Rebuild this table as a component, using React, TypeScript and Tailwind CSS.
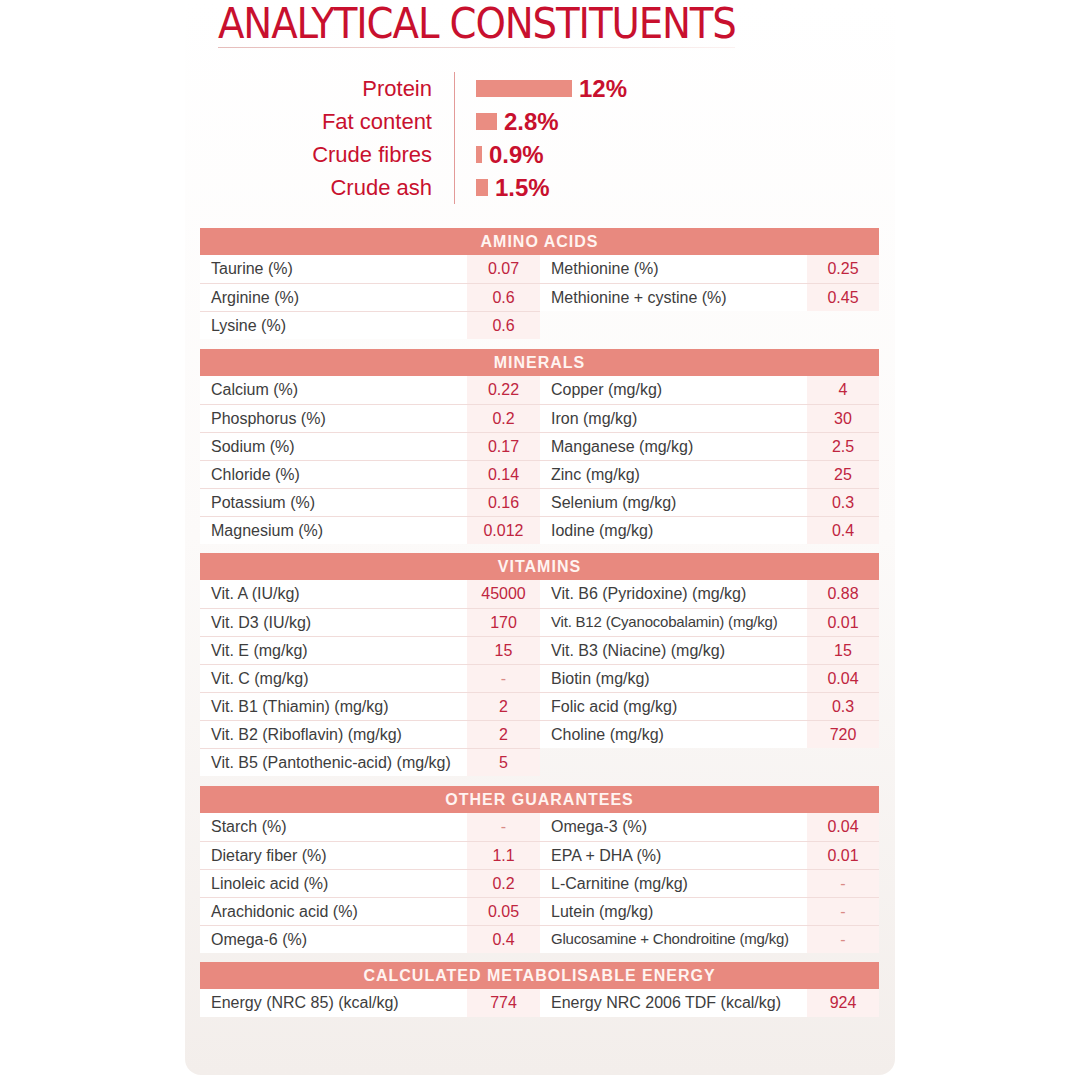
type Row = [string, string];

type Section = {
  title: string;
  left: Row[];
  right: Row[];
  gap: string;
};

const bars = [
  { label: "Protein", value: "12%", width: "w-[96px]" },
  { label: "Fat content", value: "2.8%", width: "w-[21px]" },
  { label: "Crude fibres", value: "0.9%", width: "w-[6px]" },
  { label: "Crude ash", value: "1.5%", width: "w-[12px]" },
];

const sections: Section[] = [
  {
    title: "AMINO ACIDS",
    gap: "mt-[24px]",
    left: [
      ["Taurine (%)", "0.07"],
      ["Arginine (%)", "0.6"],
      ["Lysine (%)", "0.6"],
    ],
    right: [
      ["Methionine (%)", "0.25"],
      ["Methionine + cystine (%)", "0.45"],
    ],
  },
  {
    title: "MINERALS",
    gap: "mt-[10px]",
    left: [
      ["Calcium (%)", "0.22"],
      ["Phosphorus (%)", "0.2"],
      ["Sodium (%)", "0.17"],
      ["Chloride (%)", "0.14"],
      ["Potassium (%)", "0.16"],
      ["Magnesium (%)", "0.012"],
    ],
    right: [
      ["Copper (mg/kg)", "4"],
      ["Iron (mg/kg)", "30"],
      ["Manganese (mg/kg)", "2.5"],
      ["Zinc (mg/kg)", "25"],
      ["Selenium (mg/kg)", "0.3"],
      ["Iodine (mg/kg)", "0.4"],
    ],
  },
  {
    title: "VITAMINS",
    gap: "mt-[9px]",
    left: [
      ["Vit. A (IU/kg)", "45000"],
      ["Vit. D3 (IU/kg)", "170"],
      ["Vit. E (mg/kg)", "15"],
      ["Vit. C (mg/kg)", "-"],
      ["Vit. B1 (Thiamin) (mg/kg)", "2"],
      ["Vit. B2 (Riboflavin) (mg/kg)", "2"],
      ["Vit. B5 (Pantothenic-acid) (mg/kg)", "5"],
    ],
    right: [
      ["Vit. B6 (Pyridoxine) (mg/kg)", "0.88"],
      ["Vit. B12 (Cyanocobalamin) (mg/kg)", "0.01"],
      ["Vit. B3 (Niacine) (mg/kg)", "15"],
      ["Biotin (mg/kg)", "0.04"],
      ["Folic acid (mg/kg)", "0.3"],
      ["Choline (mg/kg)", "720"],
    ],
  },
  {
    title: "OTHER GUARANTEES",
    gap: "mt-[10px]",
    left: [
      ["Starch (%)", "-"],
      ["Dietary fiber (%)", "1.1"],
      ["Linoleic acid (%)", "0.2"],
      ["Arachidonic acid (%)", "0.05"],
      ["Omega-6 (%)", "0.4"],
    ],
    right: [
      ["Omega-3 (%)", "0.04"],
      ["EPA + DHA (%)", "0.01"],
      ["L-Carnitine (mg/kg)", "-"],
      ["Lutein (mg/kg)", "-"],
      ["Glucosamine + Chondroitine (mg/kg)", "-"],
    ],
  },
  {
    title: "CALCULATED METABOLISABLE ENERGY",
    gap: "mt-[9px]",
    left: [["Energy (NRC 85) (kcal/kg)", "774"]],
    right: [["Energy NRC 2006 TDF (kcal/kg)", "924"]],
  },
];

// long labels are set tighter in the print original
const tight = new Set([
  "Vit. B12 (Cyanocobalamin) (mg/kg)",
  "Glucosamine + Chondroitine (mg/kg)",
]);

function Column({ rows, valueWidth }: { rows: Row[]; valueWidth: string }) {
  return (
    <div className="flex flex-col">
      {rows.map(([name, value], i) => (
        <div
          key={name}
          className={`flex h-[28px] ${i > 0 ? "border-t border-[#f1dcda]" : ""}`}
        >
          <div
            className={`flex flex-1 items-center bg-white pl-[11px] text-[#3d3d3d] ${
              tight.has(name) ? "text-[15px] tracking-[-0.2px]" : "text-[16px]"
            }`}
          >
            {name}
          </div>
          <div
            className={`flex ${valueWidth} items-center justify-center bg-[#fdf1f0] text-[16px] ${
              value === "-" ? "text-[#d98a86]" : "text-[#c0253f]"
            }`}
          >
            {value}
          </div>
        </div>
      ))}
    </div>
  );
}

function TableSection({ section }: { section: Section }) {
  return (
    <div className={section.gap}>
      <div className="flex h-[27px] items-center justify-center bg-[#e8897f] text-[16px] font-bold tracking-[1px] text-[#fff4f1]">
        {section.title}
      </div>
      <div className="grid grid-cols-[340px_339px] items-start">
        <Column rows={section.left} valueWidth="w-[73px]" />
        <Column rows={section.right} valueWidth="w-[72px]" />
      </div>
    </div>
  );
}

export default function App() {
  return (
    <div className="h-[1080px] w-[1080px] bg-white font-['Liberation_Sans',Arial,sans-serif]">
      <div className="ml-[185px] h-[1075px] w-[710px] rounded-b-[16px] bg-linear-to-b from-white via-[#fcfaf9] to-[#f3eeeb]">
        {/* Titre */}
        <div className="pl-[33px]">
          <h1 className="font-['Liberation_Sans_Narrow','DejaVu_Sans_Condensed',sans-serif] text-[43px] leading-[47px] tracking-[-1.1px] text-[#c8102e]">
            ANALYTICAL CONSTITUENTS
          </h1>
          <div className="h-px w-[517px] bg-linear-to-r from-[#e6bdbb] via-[#efd5d3] to-[#fbf1f0]" />
        </div>

        {/* Barres */}
        <div className="mt-[24px] flex">
          <div className="flex w-[247px] flex-col">
            {bars.map((b) => (
              <div
                key={b.label}
                className="flex h-[33px] items-center justify-end text-[22px] text-[#c8102e]"
              >
                {b.label}
              </div>
            ))}
          </div>
          <div className="ml-[22px] flex flex-col border-l border-[#e39a98] pl-[21px]">
            {bars.map((b) => (
              <div key={b.label} className="flex h-[33px] items-center">
                <div className={`h-[17px] ${b.width} bg-[#ea8d82]`} />
                <span className="ml-[7px] text-[24px] font-bold leading-none text-[#c8102e]">
                  {b.value}
                </span>
              </div>
            ))}
          </div>
        </div>

        {/* Tableaux */}
        <div className="ml-[15px] w-[679px]">
          {sections.map((s) => (
            <TableSection key={s.title} section={s} />
          ))}
        </div>
      </div>
    </div>
  );
}
